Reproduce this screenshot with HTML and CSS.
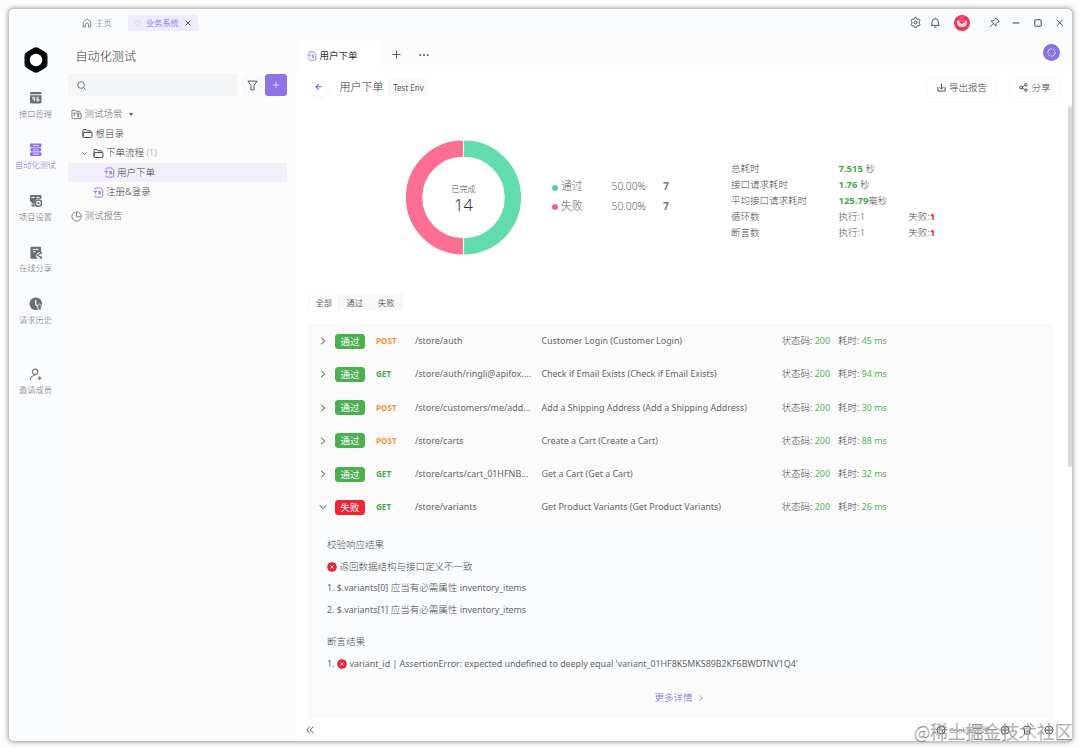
FILE: index.html
```html
<!DOCTYPE html>
<html>
<head>
<meta charset="utf-8">
<title>自动化测试</title>
<link rel="stylesheet" href="styles.css">
</head>
<body>
<svg class="defs" width="0" height="0">
  <symbol id="ts" viewBox="0 0 12 12"><path d="M2.200 3V2.300Q2.200 1 3.500 1H8.200L10.600 3.400V9.700Q10.600 11 9.300 11H3.500Q2.200 11 2.200 9.700V9M.4 4.700H4.600M2.500 4.700V7.700M8.600 4.700H6.200V6.100H8.300V7.600H5.800"/></symbol>
  <symbol id="folder" viewBox="0 0 12 12"><path d="M1 9.300V2.600Q1 1.700 1.900 1.700H4.500L5.700 3.100H9.200Q10 3.100 10 3.900V4.800M2 4.900H10.200Q11.100 4.900 11 5.800L10.700 9.500Q10.600 10.400 9.700 10.400H2.100Q1 10.400 1 9.300Z"/></symbol>
  <symbol id="right" viewBox="0 0 8 8"><path d="M2.200 .8L5.800 4L2.200 7.200"/></symbol>
  <symbol id="down" viewBox="0 0 8 8"><path d="M.8 2.200L4 5.800L7.200 2.200"/></symbol>
  <symbol id="error" viewBox="0 0 10 10"><circle cx="5" cy="5" r="4.800" fill="#ee2130" stroke="none"/><path d="M3.500 3.500L6.500 6.500M6.500 3.500L3.500 6.500" stroke="#fff"/></symbol>
</svg>
<div class="window">
  <header class="titlebar">
    <div class="home"><svg class="ic i10" viewBox="0 0 12 12"><path d="M1.500 5L6 1L10.500 5V10.800H7.800V7.500Q7.800 6 6 6Q4.200 6 4.200 7.500V10.800H1.500Z"/></svg><span>主页</span></div>
    <div class="project"><i class="ring"></i><b>业务系统</b><svg class="ic close" viewBox="0 0 8 8"><path d="M1.500 1.500L6.500 6.500M6.500 1.500L1.500 6.500"/></svg></div>
    <div class="controls">
      <svg class="ic gear" viewBox="0 0 12 12"><path d="M4.700 1.900L5 .7H7L7.300 1.900L8.600 2.600L9.800 2.200L10.900 4L10 4.900V7.100L10.900 8L9.800 9.800L8.600 9.400L7.300 10.100L7 11.300H5L4.700 10.100L3.400 9.400L2.200 9.800L1.100 8L2 7.100V4.900L1.100 4L2.200 2.200L3.400 2.600Z"/><circle cx="6" cy="6" r="1.600"/></svg>
      <svg class="ic bell" viewBox="0 0 12 12"><path d="M1 9.300H11M2.300 9.300V5.500A3.700 3.700 0 0 1 9.700 5.500V9.300M6 .6V1.800M4.500 11.200H7.500"/></svg>
      <svg class="avatar" viewBox="0 0 16 16"><circle cx="8" cy="8" r="8" fill="#ec3656"/><path d="M2.800 6L5 5L5.600 7.500L8 9L10.400 7.500L11 5L13.200 6.500Q13.400 11.900 8 12.300Q2.600 11.900 2.800 6Z" fill="#f9d3da"/><path d="M5.200 6V1.500Q8 .5 10.600 1.500V6L8 7.800Z" fill="#ff4a72"/></svg>
      <svg class="ic pin" viewBox="0 0 12 12"><path d="M7.300 1L11 4.700L9.700 5.300L7.800 7.200L7.600 9.600L2.400 4.400L4.800 4.200L6.700 2.300ZM4.900 7L1.200 10.800"/></svg>
      <svg class="ic min" viewBox="0 0 8 8"><path d="M.5 4H7.500"/></svg>
      <svg class="ic max" viewBox="0 0 8 8"><rect x=".8" y=".8" width="6.400" height="6.400" rx=".5"/></svg>
      <svg class="ic cross" viewBox="0 0 8 8"><path d="M.8 .8L7.200 7.200M7.200 .8L.8 7.200"/></svg>
    </div>
  </header>
  <div class="content">
    <nav class="rail">
      <svg class="logo" viewBox="0 0 24 26"><path d="M9.500 1Q12 -.5 14.500 1L21.300 5Q23.500 6.300 23.500 9V17Q23.500 19.700 21.300 21L14.500 25Q12 26.500 9.500 25L2.700 21Q.5 19.700 .5 17V9Q.5 6.300 2.700 5Z" fill="#05070c"/><circle cx="12" cy="13" r="6.200" fill="#fff"/></svg>
      <div class="nav"><svg viewBox="0 0 14 14"><path d="M2.500 1H11.500Q13 1 13 2.600V3.300H1V2.600Q1 1 2.500 1ZM1 4.300H13V11.500Q13 13 11.500 13H2.500Q1 13 1 11.500Z" fill="currentColor"/><path d="M4 6.500H5.800V10.500M4 6.500V8.500H5.800M10 6.500H8.300V10.300H10.300V8.400H8.300" fill="none" stroke="#fff"/></svg><span>接口管理</span></div>
      <div class="nav on"><svg viewBox="0 0 14 14"><g fill="currentColor"><rect x="1" y=".5" width="12" height="3.900" rx="1.300"/><rect x="1.500" y="5" width="11" height="3.900" rx="1.300"/><rect x="1" y="9.600" width="12" height="3.900" rx="1.300"/></g><path d="M4 2.500H10.500M4 7H10M4 11.500H10.500" stroke="#e8e2ff" stroke-width=".9"/></svg><span>自动化测试</span></div>
      <div class="nav"><svg viewBox="0 0 14 14"><path d="M2 1H12Q13 1 13 2V5H8L6 8V10H3.500L2 8Q1 8 1 7V2Q1 1 2 1ZM2 11H6V13H3Z" fill="currentColor"/><path d="M2.500 3.500H6M7.500 3.500H11" stroke="#fff"/><circle cx="9.800" cy="9.500" r="3.300" fill="#fff" stroke="currentColor" stroke-width="1.600"/><circle cx="9.800" cy="9.500" r="1.200" fill="currentColor"/></svg><span>项目设置</span></div>
      <div class="nav"><svg viewBox="0 0 14 14"><path d="M2.500 .7H11.500Q12.500 .7 12.500 1.800V6L9 7L7 10L9 13.300H2.500Q1.500 13.300 1.500 12.200V1.800Q1.500 .7 2.500 .7Z" fill="currentColor"/><path d="M4 3.500H10M4 6H7" stroke="#fff"/><path d="M12.500 7L8.500 9.600L12.500 12" fill="none" stroke="currentColor" stroke-width="1.200"/><circle cx="12.300" cy="7.200" r="1.300" fill="currentColor"/><circle cx="12.300" cy="12" r="1.300" fill="currentColor"/></svg><span>在线分享</span></div>
      <div class="nav"><svg viewBox="0 0 14 14"><circle cx="7" cy="7" r="6.500" fill="currentColor"/><path d="M7 3V7.500L9 9.500" fill="none" stroke="#fff" stroke-width="1.300"/><path d="M11 6.800L14 10.500H12.500V13.500H9.500V10.500H8Z" fill="currentColor" stroke="#fff" stroke-width=".7"/></svg><span>请求历史</span></div>
      <div class="nav invite"><svg viewBox="0 0 14 14"><g fill="none" stroke="currentColor" stroke-width="1.200"><circle cx="6.300" cy="4" r="2.800"/><path d="M1.300 12.500Q1.500 8 6.300 7.800M11 8.500V12.500M9 10.500H13"/></g></svg><span>邀请成员</span></div>
    </nav>
    <aside class="panel">
      <h1>自动化测试</h1>
      <div class="search-row">
        <div class="search"><svg class="ic" viewBox="0 0 10 10"><circle cx="4.500" cy="4.500" r="3.700"/><path d="M7.300 7.300L9.500 9.500"/></svg></div>
        <div class="filter"><svg class="ic" viewBox="0 0 12 12"><path d="M1 1.200H11L7.700 6V10.800H4.300V6Z"/></svg></div>
        <div class="add"><svg class="ic" viewBox="0 0 10 10"><path d="M5 1V9M1 5H9"/></svg></div>
      </div>
      <div class="tree">
        <div class="row dim"><svg class="ic i11" viewBox="0 0 12 12"><path d="M1 9V2.300Q1 1.300 2 1.300H4.500L5.500 2.500H9Q10 2.500 10 3.500M3 10.500H10Q11 10.500 11 9.500V4.500H5M1 9Q1 10.500 2.500 10.500M2.500 4.500H5M3.500 4.500V8M9 6H7Q6.300 7.100 8 7.200Q9.300 7.800 8 8.500H6.500"/></svg><span>测试场景</span><i class="caret"></i></div>
        <div class="row l1"><svg class="ic i11"><use href="#folder"/></svg><span>根目录</span></div>
        <div class="row l2"><svg class="ic chev"><use href="#down"/></svg><svg class="ic i11"><use href="#folder"/></svg><span>下单流程</span><em>(1)</em></div>
        <div class="row l3 sel"><svg class="ic i11 violet"><use href="#ts"/></svg><span>用户下单</span></div>
        <div class="row l2b"><svg class="ic i11 violet"><use href="#ts"/></svg><span>注册&amp;登录</span></div>
        <div class="row dim report"><svg class="ic i11" viewBox="0 0 12 12"><path d="M4.500 1.300A5 5 0 1 0 10.800 7.500M6 .8V6.300H11.200A5.200 5.200 0 0 0 6 .8Z"/></svg><span>测试报告</span></div>
      </div>
    </aside>
    <main class="main">
      <div class="tabs">
        <div class="tab"><svg class="ic i10 violet"><use href="#ts"/></svg><span>用户下单</span></div>
        <svg class="ic plus" viewBox="0 0 10 10"><path d="M5 .5V9.500M.5 5H9.500"/></svg>
        <svg class="dots" viewBox="0 0 10 4"><circle cx="1.200" cy="2" r=".9"/><circle cx="5" cy="2" r=".9"/><circle cx="8.800" cy="2" r=".9"/></svg>
        <div class="sync"><svg class="ic" viewBox="0 0 10 10"><path d="M1 6A4.200 4.200 0 0 1 5.500 .9M9 4A4.200 4.200 0 0 1 4.500 9.100M3.200 8.300A4.200 4.200 0 0 1 1.500 7.500M6.800 1.700A4.200 4.200 0 0 1 8.500 2.500"/></svg></div>
      </div>
      <div class="head">
        <div class="back"><svg class="ic" viewBox="0 0 8 8"><path d="M7.500 4H1M4 1L1 4L4 7"/></svg></div>
        <h2>用户下单</h2>
        <span class="tag">Test Env</span>
        <div class="btn export"><svg class="ic" viewBox="0 0 10 10"><path d="M5 .5V6.500M2.700 4.500L5 6.800L7.300 4.500M1 4.500V9H9V4.500"/></svg><span>导出报告</span></div>
        <div class="btn share"><svg class="ic" viewBox="0 0 10 10"><circle cx="2.200" cy="5" r="1.500"/><circle cx="7.700" cy="2" r="1.400"/><circle cx="7.700" cy="8" r="1.400"/><path d="M3.500 4.300L6.500 2.700M3.500 5.700L6.500 7.300"/></svg><span>分享</span></div>
      </div>
      <div class="body">
        <div class="report-view">
          <section class="summary">
            <div class="donut">
              <svg viewBox="0 0 116 116"><g fill="none" stroke-width="16.500"><path d="M58.600 8.750A49.250 49.250 0 0 1 58.600 107.250" stroke="#62dcac"/><path d="M57.400 107.250A49.250 49.250 0 0 1 57.400 8.750" stroke="#fc6e92"/></g></svg>
              <div class="total"><span>已完成</span><strong>14</strong></div>
            </div>
            <div class="legend">
              <i class="pass"></i><span>通过</span><span class="pct">50.00%</span><b>7</b>
              <i class="fail"></i><span>失败</span><span class="pct">50.00%</span><b>7</b>
            </div>
            <div class="stats">
              <span>总耗时</span><span><b>7.515</b> 秒</span><span></span>
              <span>接口请求耗时</span><span><b>1.76</b> 秒</span><span></span>
              <span>平均接口请求耗时</span><span><b>125.79</b>毫秒</span><span></span>
              <span>循环数</span><span>执行:1</span><span>失败:<b class="red">1</b></span>
              <span>断言数</span><span>执行:1</span><span>失败:<b class="red">1</b></span>
            </div>
          </section>
          <div class="segments"><span class="active">全部</span><span>通过</span><span>失败</span></div>
          <section class="list">
            <div class="item"><svg class="ic arrow"><use href="#right"/></svg><b class="badge">通过</b><b class="method post">POST</b><span class="path">/store/auth</span><span class="name">Customer Login (Customer Login)</span><span class="code">状态码: <i>200</i></span><span>耗时: <i>45 ms</i></span></div>
            <div class="item"><svg class="ic arrow"><use href="#right"/></svg><b class="badge">通过</b><b class="method">GET</b><span class="path">/store/auth/ringli@apifox....</span><span class="name">Check if Email Exists (Check if Email Exists)</span><span class="code">状态码: <i>200</i></span><span>耗时: <i>94 ms</i></span></div>
            <div class="item"><svg class="ic arrow"><use href="#right"/></svg><b class="badge">通过</b><b class="method post">POST</b><span class="path">/store/customers/me/add...</span><span class="name">Add a Shipping Address (Add a Shipping Address)</span><span class="code">状态码: <i>200</i></span><span>耗时: <i>30 ms</i></span></div>
            <div class="item"><svg class="ic arrow"><use href="#right"/></svg><b class="badge">通过</b><b class="method post">POST</b><span class="path">/store/carts</span><span class="name">Create a Cart (Create a Cart)</span><span class="code">状态码: <i>200</i></span><span>耗时: <i>88 ms</i></span></div>
            <div class="item"><svg class="ic arrow"><use href="#right"/></svg><b class="badge">通过</b><b class="method">GET</b><span class="path">/store/carts/cart_01HFNB...</span><span class="name">Get a Cart (Get a Cart)</span><span class="code">状态码: <i>200</i></span><span>耗时: <i>32 ms</i></span></div>
            <div class="item"><svg class="ic arrow"><use href="#down"/></svg><b class="badge bad">失败</b><b class="method">GET</b><span class="path">/store/variants</span><span class="name">Get Product Variants (Get Product Variants)</span><span class="code">状态码: <i>200</i></span><span>耗时: <i>26 ms</i></span></div>
            <div class="detail">
              <p>校验响应结果</p>
              <p><svg class="err"><use href="#error"/></svg><span>返回数据结构与接口定义不一致</span></p>
              <p><span class="en">1. $.variants[0]</span><span>应当有必需属性</span><span class="en">inventory_items</span></p>
              <p><span class="en">2. $.variants[1]</span><span>应当有必需属性</span><span class="en">inventory_items</span></p>
              <p class="gap">断言结果</p>
              <p><span class="en">1.</span><svg class="err"><use href="#error"/></svg><span class="en">variant_id | AssertionError: expected undefined to deeply equal 'variant_01HF8K5MKS89B2KF6BWDTNV1Q4'</span></p>
            </div>
            <div class="more"><span>更多详情</span><svg class="ic"><use href="#right"/></svg></div>
          </section>
        </div>
        <i class="scrollbar"></i>
      </div>
      <footer class="status">
        <svg class="ic fold" viewBox="0 0 8 8"><path d="M3.800 .7L.8 4L3.800 7.300M7.300 .7L4.300 4L7.300 7.300"/></svg>
        <div class="tools"><svg class="ic" viewBox="0 0 10 10"><circle cx="5" cy="5" r="4"/><path d="M3 4H4M6 6H7"/></svg><span>Cookie 管理</span><svg class="ic t2" viewBox="0 0 10 10"><circle cx="5" cy="5" r="4"/><path d="M5 2V8M2 5H8"/></svg><svg class="ic t3" viewBox="0 0 10 10"><path d="M2 2L1 4L2.500 4.500V9H7.500V4.500L9 4L8 2L6 1L5 2L4 1Z"/></svg><svg class="ic t4" viewBox="0 0 10 10"><circle cx="5" cy="5" r="4"/><path d="M5 2V8M2 5H8"/></svg></div>
      </footer>
    </main>
  </div>
</div>
<div class="watermark">@稀土掘金技术社区</div>
</body>
</html>
```
FILE: styles.css
```css
* { box-sizing: border-box; }
body { margin: 0; padding: 9px 8px 7px 9px; width: 1080px; height: 748px; overflow: hidden; background: #fdfdfd; color: #484b51; font: 300 9.5px/14px "Noto Sans", "Noto Sans CJK SC", sans-serif; }
.defs { position: absolute; }
h1, h2, p { margin: 0; font-weight: 300; }
i, em { font-style: normal; }
svg { flex: none; display: block; }
.ic { fill: none; stroke: currentColor; stroke-width: 1; }
.i10 { width: 10px; height: 10px; }
.i11 { width: 11px; height: 11px; }
.violet { color: #8d70e8; }
.window { width: 1063px; height: 732px; display: flex; flex-direction: column; border-radius: 5px; overflow: hidden; background: #fff; box-shadow: 0 0 0 1px #c5c5c5, 0 0 5px 1px #999; }

.titlebar { height: 27px; flex: none; display: flex; align-items: center; background: #fafbfd; font-size: 8px; color: #6c7076; padding-left: 73px; }
.home { display: flex; gap: 3.500px; align-items: center; width: 46px; }
.project { display: flex; align-items: center; width: 70px; height: 16px; background: #eeebfc; border-radius: 2px; padding-left: 7px; color: #967de9; }
.project b { font-weight: 400; font-size: 8.200px; }
.ring { width: 6px; height: 6px; border: 1px solid #dcd4f6; border-radius: 50%; margin-right: 5px; }
.close { width: 8px; height: 8px; margin-left: 5px; color: #555; }
.controls { margin-left: auto; display: flex; align-items: center; color: #44474d; padding-right: 9px; }
.gear { width: 11px; height: 11px; margin-right: 8.500px; }
.bell { width: 10.500px; height: 11px; margin-right: 13.500px; }
.avatar { width: 16px; height: 16px; margin-right: 19px; }
.pin { width: 11px; height: 11px; margin-right: 12.500px; }
.min { width: 8px; height: 8px; margin-right: 13.500px; }
.max { width: 8px; height: 8px; margin-right: 14px; }
.cross { width: 7.500px; height: 7.500px; }

.content { flex: 1; min-height: 0; display: flex; }
.rail { width: 57px; flex: none; background: #fafbfd; display: flex; flex-direction: column; align-items: center; padding: 10.500px 4px 0 0; }
.logo { width: 24px; height: 26px; margin-bottom: 18.500px; }
.nav { height: 51.500px; flex: none; display: flex; flex-direction: column; align-items: center; gap: 3px; font-size: 8.200px; line-height: 12px; color: #6d7075; white-space: nowrap; }
.nav svg { width: 13.500px; height: 13.500px; color: #6b6f73; }
.nav.on, .nav.on svg { color: #8d70e8; }
.invite { margin-top: 19px; }
.invite svg { color: #777; }

.panel { width: 230px; flex: none; background: #fcfcfd; padding: 10px 8px 0 2px; border-right: 1px solid #f9f9fa; }
.panel h1 { font-size: 12.100px; line-height: 20px; padding: 1px 0 0 7.500px; color: #34373c; }
.search-row { display: flex; margin-top: 7px; height: 22px; }
.search { width: 170px; background: #f4f5f7; border-radius: 3px; display: flex; align-items: center; padding-left: 9px; color: #666; }
.search svg { width: 9px; height: 9px; }
.filter { width: 20px; margin-left: 4px; background: #f8f9fa; display: flex; align-items: center; justify-content: center; }
.filter svg { width: 11px; height: 11px; }
.add { width: 22px; margin-left: 3px; background: #8f73ea; border-radius: 3px; color: #eee8ff; display: flex; align-items: center; justify-content: center; }
.add svg { width: 8px; height: 8px; }
.tree { padding-top: 8px; }
.row { height: 19.600px; display: flex; align-items: center; color: #3d4045; padding: .5px 0 0 3px; gap: 2.500px; border-radius: 2px; }
.row.dim { color: #6f7277; }
.row.l1 { padding-left: 14px; }
.row.l2 { padding-left: 14px; }
.row.l2b { padding-left: 24.500px; }
.row.l3 { padding-left: 35.500px; }
.row.sel { width: 219px; background: #f2effb; }
.row em { color: #888; font-size: 9px; }
.row.report { margin-top: 4px; }
.chev { width: 5px; height: 5px; margin-right: 3px; }
.caret { border: 2.500px solid transparent; border-top: 3px solid #555; border-bottom: 0; margin-left: 4px; }

.main { flex: 1; min-width: 0; display: flex; flex-direction: column; background: #fff; }
.tabs { height: 32px; flex: none; background: #fcfcfc; display: flex; align-items: center; padding: 5px 12px 0 3px; }
.tab { align-self: stretch; width: 81px; background: #fff; display: flex; align-items: center; gap: 2.500px; padding: 2px 0 0 8px; color: #33363b; font-weight: 400; }
.plus { width: 9px; height: 9px; margin-left: 12px; }
.dots { width: 10px; height: 4px; margin-left: 17.500px; fill: #555; }
.sync { width: 17px; height: 17px; margin: -5px 0 0 auto; background: #8a73de; border-radius: 50%; color: #eee8ff; display: flex; align-items: center; justify-content: center; }
.sync svg { width: 9px; height: 9px; }
.head { height: 38px; flex: none; display: flex; align-items: center; padding: 0 11px 0 13px; }
.back { width: 20px; height: 20px; border-radius: 50%; box-shadow: 0 1px 2px #f0f0f0; display: flex; align-items: center; justify-content: center; color: #8768ea; }
.back svg { width: 7.500px; height: 7.500px; stroke-width: 1.300; }
.head h2 { font-size: 11px; margin-left: 10.500px; color: #34373c; }
.tag { width: 41px; height: 17px; margin-left: 4.500px; background: #f8f8f8; border-radius: 2px; font-size: 8px; font-weight: 400; line-height: 17px; text-align: center; color: #595b60; }
.btn { display: flex; align-items: center; justify-content: center; gap: 3px; height: 21px; border: 1px solid #f7f7f7; border-radius: 3px; color: #3f4247; }
.btn svg { width: 9px; height: 9px; }
.btn span { padding-top: 1px; }
.export { width: 72px; margin-left: auto; }
.share { width: 52px; margin-left: 11px; }
.body { flex: 1; min-height: 0; display: flex; }
.report-view { width: 772px; flex: none; padding-left: 12px; }
.scrollbar { width: 4px; height: 361px; background: #d8d8d8; border-radius: 2px; }

.summary { height: 188px; display: flex; }
.donut { width: 115px; height: 115px; margin: 34px 0 0 98px; display: grid; }
.donut > * { grid-area: 1 / 1; }
.donut svg { width: 115px; height: 115px; }
.total { display: flex; flex-direction: column; align-items: center; justify-content: center; padding-top: 1px; font-size: 8.200px; line-height: 13px; }
.total strong { font-size: 16.500px; line-height: 19px; font-weight: 300; color: #2f3237; }
.legend { margin: 70.500px 0 0 31px; display: grid; grid-template-columns: 9px 50.500px 51.500px 9.500px; grid-auto-rows: 19.600px; align-items: center; align-content: start; font-size: 10.800px; color: #5d6066; }
.legend i { width: 6px; height: 6px; border-radius: 50%; margin-top: 3px; }
.legend .pct { font-size: 10.300px; }
.legend b { font-size: 10.500px; font-weight: 700; color: #777a7f; }
.pass { background: #55d5a5; }
.fail { background: #f3628c; }
.stats { margin: 54.500px 0 0 58.500px; display: grid; grid-template-columns: 107.500px 70px 60px; grid-auto-rows: 16.200px; align-items: center; align-content: start; white-space: nowrap; }
.stats b { color: #45aa49; font-weight: 700; font-size: 9.500px; }
.stats .red { color: #ee2130; }
.segments { width: 94px; height: 17px; display: flex; background: #f8f8f8; border-radius: 3px; font-size: 8.200px; font-weight: 400; line-height: 17px; margin-left: 1px; padding-left: .500px; color: #63666b; }
.segments span { width: 31.500px; text-align: center; }
.segments span + span { position: relative; left: 1px; }
.segments .active { width: 28.500px; background: #fff; box-shadow: 0 0 2px #e8e8e8; }

.list { margin-top: 13px; width: 745px; height: 395px; background: #fafafa; }
.item { height: 33.250px; display: flex; align-items: center; padding: 1px 0 0 11px; white-space: nowrap; }
.arrow { width: 8px; height: 8px; }
.badge { width: 30px; height: 15px; margin-left: 8px; border-radius: 3.500px; background: #4caf50; color: #fff; font-size: 9.500px; font-weight: 400; line-height: 15px; text-align: center; }
.bad { background: #f02435; }
.method { width: 39px; margin-left: 11px; color: #45aa49; font-size: 8.100px; line-height: 12px; font-weight: 700; }
.post { color: #f79436; }
.path { width: 126.500px; font-size: 8.950px; font-weight: 400; color: #63666b; }
.name { width: 240px; font-size: 8.900px; font-weight: 400; color: #63666b; }
.code { width: 56.500px; }
.item i { color: #53b657; font-size: 8.900px; font-weight: 400; }
.detail { margin: 4px 10px 0; height: 145px; padding: 6.500px 9px 0; background: #fafbfd; }
.detail p { height: 21.700px; display: flex; align-items: center; gap: 2.500px; white-space: nowrap; }
.detail .gap { margin-top: 10.500px; }
.en { font-size: 8.850px; font-weight: 400; color: #63666b; }
.err { width: 10px; height: 10px; }
.more { display: flex; align-items: center; justify-content: center; height: 48px; padding: 2px 3px 0 0; gap: 5px; color: #8467e2; }
.more svg { width: 6px; height: 6px; }
.status { height: 22px; flex: none; display: flex; align-items: center; padding: 0 18px 0 9.500px; color: #555; }
.fold { width: 8px; height: 8px; }
.tools { margin-left: auto; display: flex; align-items: center; gap: 3px; font-size: 7.500px; }
.tools svg { width: 10px; height: 10px; }
.tools .t2 { margin-left: 8px; }
.tools .t3, .tools .t4 { margin-left: 9px; }
.watermark { position: absolute; left: 914px; top: 719px; font: 300 17.800px/25px "Noto Sans CJK SC", sans-serif; color: rgba(255, 255, 255, .5); -webkit-text-stroke: .4px #777; white-space: nowrap; }
```
